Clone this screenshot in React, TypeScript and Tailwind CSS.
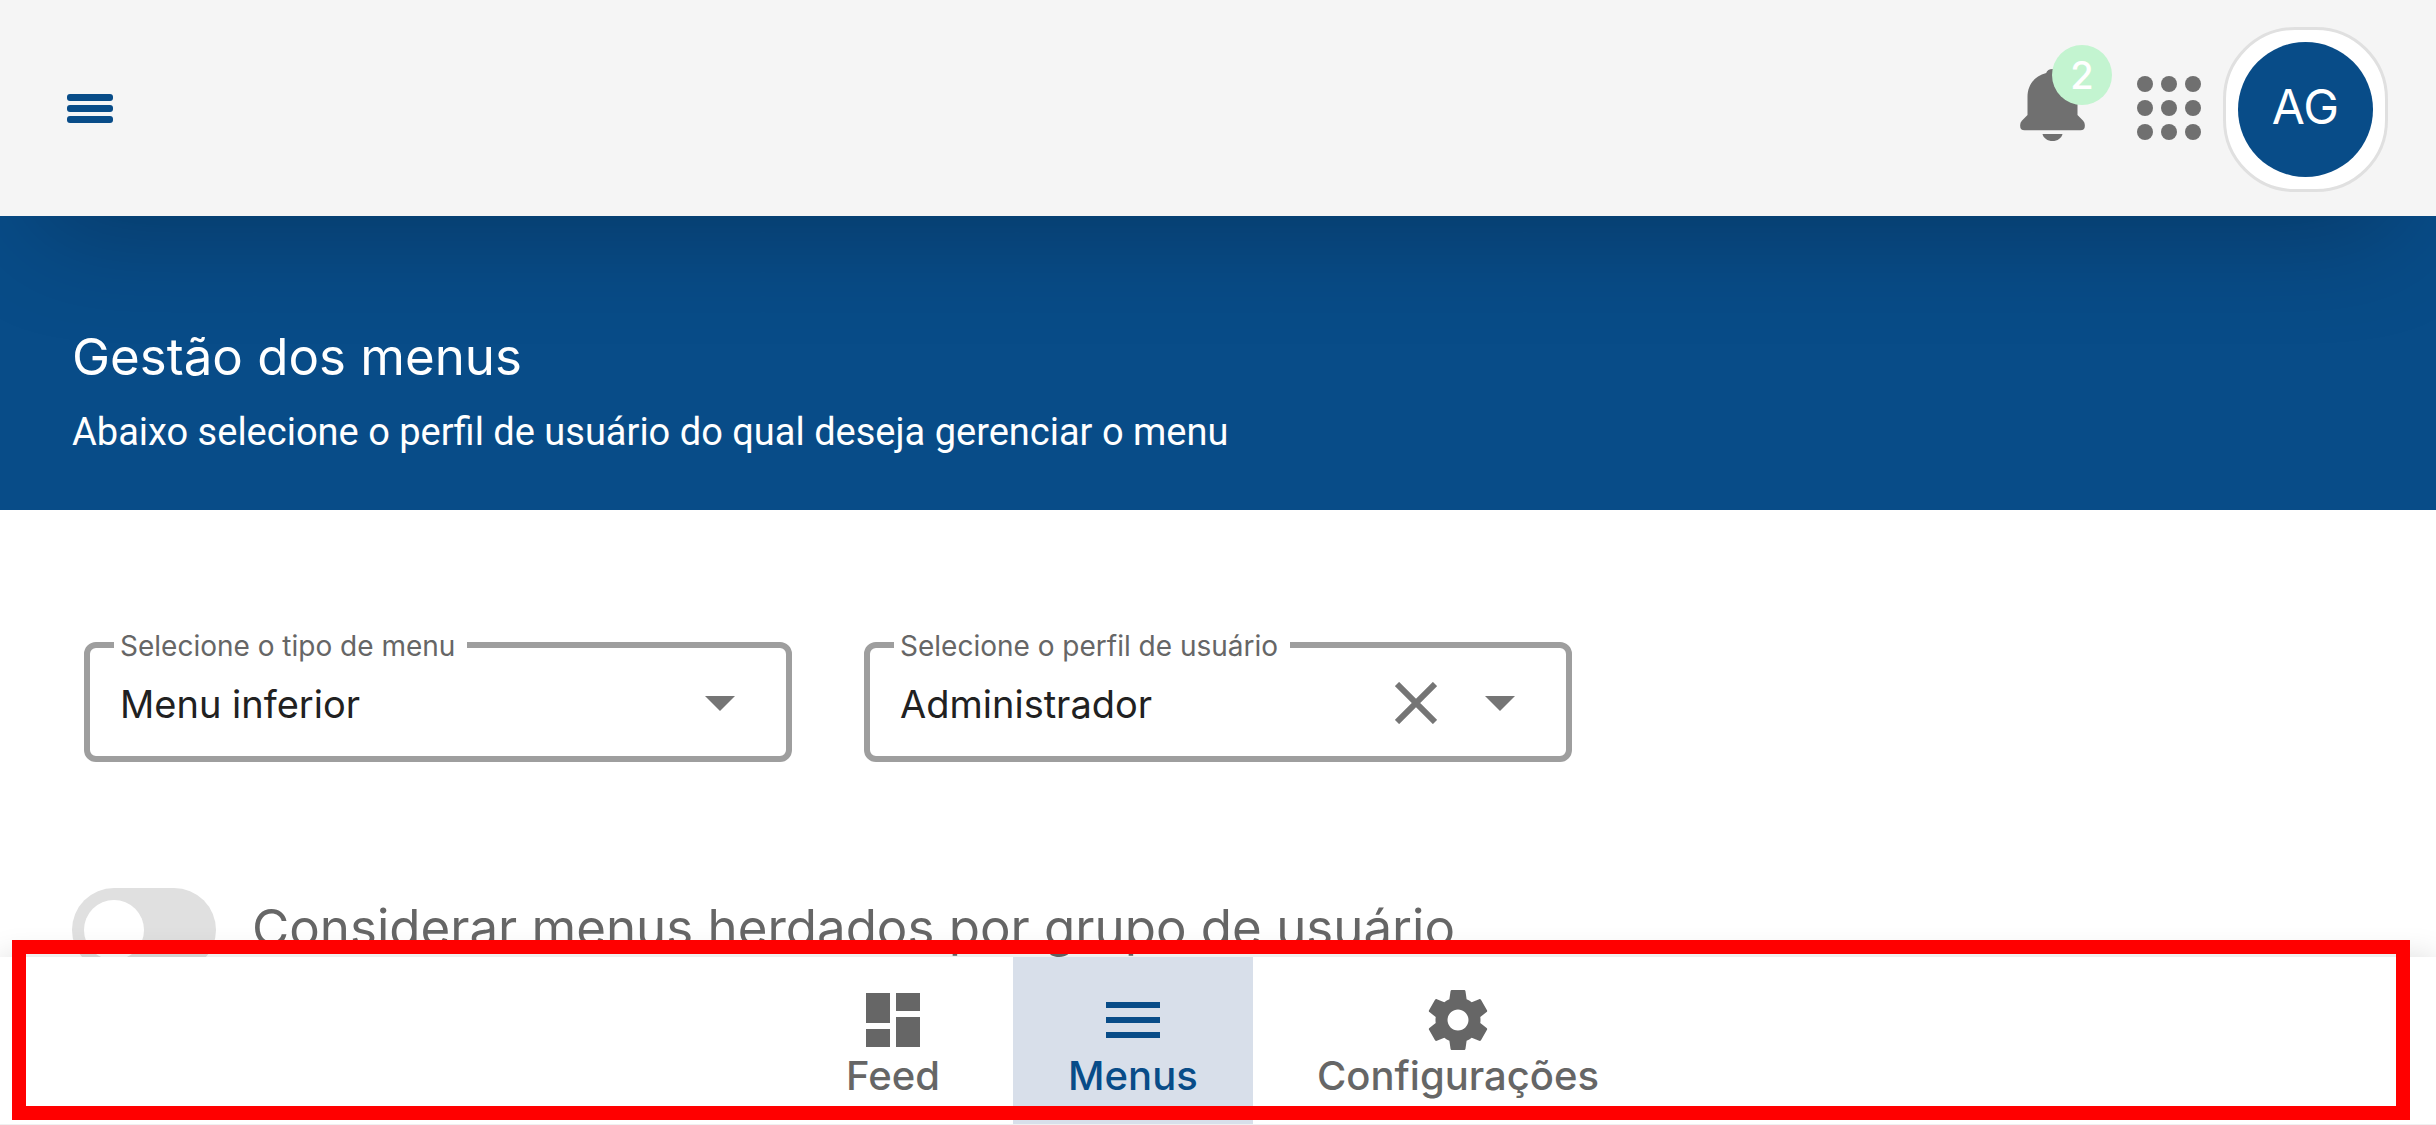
import { useState } from "react";
import type { ReactNode } from "react";
import clsx from "clsx";

function HamburgerIcon() {
  return (
    <svg viewBox="0 0 46 29" className="h-[29px] w-[46px]" fill="currentColor" aria-hidden="true">
      <rect width="46" height="7" rx="3" />
      <rect y="11" width="46" height="7" rx="3" />
      <rect y="22" width="46" height="7" rx="3" />
    </svg>
  );
}

function BellIcon() {
  return (
    <svg viewBox="0 0 194 216" className="h-[72px] w-[65px]" fill="currentColor" aria-hidden="true">
      <path d="M22 138V84C22 48 44 20 78 12C81 4 87 0 97 0S113 4 116 12C150 20 172 48 172 84V138L189 155Q194 160 194 168V171Q194 184 181 184H13Q0 184 0 171V168Q0 160 5 155Z" />
      <path d="M67 195H127C124 208 112 216 97 216S70 208 67 195Z" />
    </svg>
  );
}

function AppsIcon() {
  return (
    <svg viewBox="0 0 64 64" className="size-16" fill="currentColor" aria-hidden="true">
      {[8, 32, 56].map((y) => [8, 32, 56].map((x) => <circle key={`${x}-${y}`} cx={x} cy={y} r="8" />))}
    </svg>
  );
}

function Icon({ path }: { path: string }) {
  return (
    <svg viewBox="0 0 24 24" className="size-[72px]" fill="currentColor" aria-hidden="true">
      <path d={path} />
    </svg>
  );
}

const ICONS = {
  feed: "M3 13h8V3H3v10zm0 8h8v-6H3v6zm10 0h8V11h-8v10zm0-18v6h8V3h-8z",
  menus: "M3 18h18v-2H3v2zm0-5h18v-2H3v2zm0-7v2h18V6H3z",
  settings:
    "M19.43 12.98c.04-.32.07-.64.07-.98s-.03-.66-.07-.98l2.11-1.65c.19-.15.24-.42.12-.64l-2-3.46c-.12-.22-.39-.3-.61-.22l-2.49 1c-.52-.4-1.08-.73-1.69-.98l-.38-2.65C14.46 2.18 14.25 2 14 2h-4c-.25 0-.46.18-.49.42l-.38 2.65c-.61.25-1.17.59-1.69.98l-2.49-1c-.23-.09-.49 0-.61.22l-2 3.46c-.13.22-.07.49.12.64l2.11 1.65c-.04.32-.07.65-.07.98s.03.66.07.98l-2.11 1.65c-.19.15-.24.42-.12.64l2 3.46c.12.22.39.3.61.22l2.49-1c.52.4 1.08.73 1.69.98l.38 2.65c.03.24.24.42.49.42h4c.25 0 .46-.18.49-.42l.38-2.65c.61-.25 1.17-.59 1.69-.98l2.49 1c.23.09.49 0 .61-.22l2-3.46c.12-.22.07-.49-.12-.64l-2.11-1.65zM12 15.5c-1.93 0-3.5-1.57-3.5-3.5s1.57-3.5 3.5-3.5 3.5 1.57 3.5 3.5-1.57 3.5-3.5 3.5z",
};

type SelectFieldProps = {
  id: string;
  label: string;
  options: string[];
  initial: string;
  clearable?: boolean;
};

function SelectField({ id, label, options, initial, clearable }: SelectFieldProps) {
  const [value, setValue] = useState(initial);
  return (
    <div className="relative h-[120px]">
      <select
        id={id}
        value={value}
        onChange={(e) => setValue(e.target.value)}
        className="size-full appearance-none rounded-xl border-6 border-[#9e9e9e] bg-white px-[30px] pt-1 text-[38px] text-[#212121] outline-none"
      >
        {clearable && <option value="" />}
        {options.map((o) => (
          <option key={o}>{o}</option>
        ))}
      </select>
      <label htmlFor={id} className="absolute -top-3.5 left-[30px] bg-white pr-3 pl-1.5 text-[28px] leading-9 text-[#666]">
        {label}
      </label>
      <div className="pointer-events-none absolute inset-y-0 right-[57px] flex items-center gap-12 pt-0.5 text-[#757575]">
        {clearable && (
          <button type="button" aria-label="Limpar" onClick={() => setValue("")} className="pointer-events-auto">
            <svg viewBox="0 0 42 42" className="size-[42px]" fill="none" stroke="currentColor" strokeWidth="6" aria-hidden="true">
              <path d="M2 2L40 40M40 2L2 40" />
            </svg>
          </button>
        )}
        <svg viewBox="0 0 30 15" className="h-[15px] w-[30px]" fill="currentColor" aria-hidden="true">
          <path d="M0 0H30L15 15Z" />
        </svg>
      </div>
    </div>
  );
}

type NavItemProps = { label: string; icon: ReactNode; active?: boolean; wide?: boolean };

function NavItem({ label, icon, active, wide }: NavItemProps) {
  return (
    <a
      href="#"
      aria-current={active ? "page" : undefined}
      className={clsx(
        "flex min-w-60 flex-col items-center pt-[27px] text-[40px] leading-10 font-medium",
        wide ? "px-16" : "px-8",
        active ? "bg-[#d8dfea] text-[#084c88]" : "text-[#666]",
      )}
    >
      {icon}
      <span>{label}</span>
    </a>
  );
}

export default function App() {
  const [inherit, setInherit] = useState(false);
  return (
    <div className="flex h-screen flex-col overflow-hidden bg-white font-['Inter',sans-serif]">
      <header className="relative z-10 flex h-[216px] shrink-0 items-center justify-between bg-[#f5f5f5] pr-12 pl-[67px] shadow-[0_54px_110px_-40px_rgba(0,0,0,0.25)]">
        <button type="button" aria-label="Abrir menu" className="text-[#084c88]">
          <HamburgerIcon />
        </button>
        <div className="flex items-center pt-0.5 text-[#707070]">
          <button type="button" aria-label="Notificações" className="relative mr-[52px] pb-2">
            <BellIcon />
            <span className="absolute -top-6 left-8 flex size-[60px] items-center justify-center rounded-full bg-[#c3f4d0] text-[38px] font-medium text-white">
              2
            </span>
          </button>
          <button type="button" aria-label="Aplicativos" className="mr-[22px] pb-0.5">
            <AppsIcon />
          </button>
          <button type="button" aria-label="Conta" className="rounded-[72px] border-3 border-[#e0e0e0] bg-white p-3">
            <span className="flex size-[135px] items-center justify-center rounded-full bg-[#084c88] pb-1 text-[48px] text-white">AG</span>
          </button>
        </div>
      </header>

      <section className="flex h-[294px] shrink-0 flex-col justify-end bg-[#084c88] px-[72px] pb-[51px] text-white">
        <h1 className="text-[51px] leading-[72px]">Gestão dos menus</h1>
        <p className="mt-3 font-['Roboto',sans-serif] text-[38px] leading-[54px]">
          Abaixo selecione o perfil de usuário do qual deseja gerenciar o menu
        </p>
      </section>

      <main className="min-h-0 flex-1 pt-[132px]">
        <div className="grid grid-cols-3 gap-[72px] px-[84px]">
          <SelectField id="menu-type" label="Selecione o tipo de menu" options={["Menu inferior", "Menu lateral"]} initial="Menu inferior" />
          <SelectField id="profile" label="Selecione o perfil de usuário" options={["Administrador"]} initial="Administrador" clearable />
        </div>
        <div className="mt-[126px] flex items-center gap-9 px-[72px]">
          <input
            id="inherit"
            type="checkbox"
            role="switch"
            checked={inherit}
            onChange={(e) => setInherit(e.target.checked)}
            className="h-[84px] w-36 shrink-0 appearance-none rounded-full bg-[#e0e0e0] p-3 before:block before:size-[60px] before:rounded-full before:bg-white checked:bg-[#084c88] checked:before:ml-auto"
          />
          <label htmlFor="inherit" className="pb-1 text-[51px] leading-[72px] text-[#666]">
            Considerar menus herdados por grupo de usuário
          </label>
        </div>
      </main>

      <nav className="relative z-10 flex h-[168px] shrink-0 justify-center border-b border-[#f0f0f0] bg-white shadow-[0_0_30px_rgba(0,0,0,0.14)]">
        <NavItem label="Feed" icon={<Icon path={ICONS.feed} />} />
        <NavItem label="Menus" icon={<Icon path={ICONS.menus} />} active />
        <NavItem label="Configurações" icon={<Icon path={ICONS.settings} />} wide />
        <div className="pointer-events-none absolute -top-[17px] right-[26px] bottom-1 left-3 border-14 border-[#ff0000]" />
      </nav>
    </div>
  );
}
